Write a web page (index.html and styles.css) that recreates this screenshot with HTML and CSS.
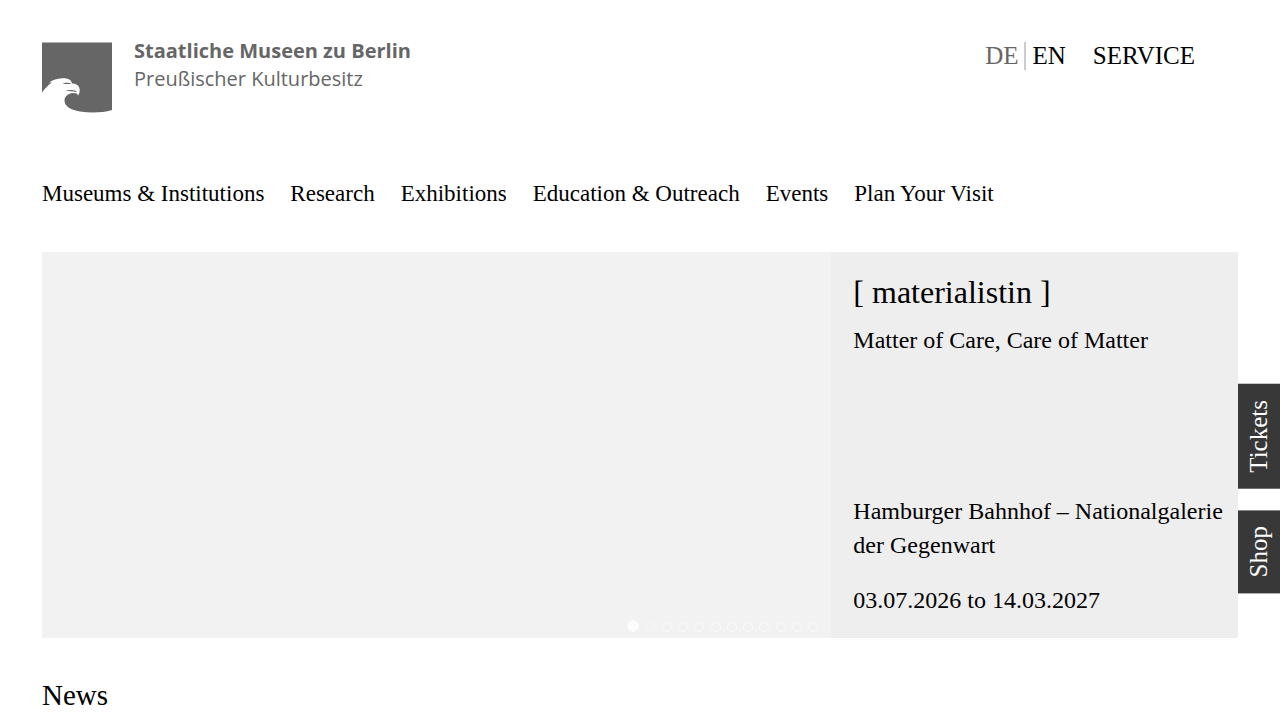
FILE: index.html
```html
<!DOCTYPE html>
<html lang="en">
<head>
    <meta charset="UTF-8">
    <meta name="viewport" content="width=device-width, initial-scale=1.0">
    <title>Staatliche Museen zu Berlin</title>
    <link rel="stylesheet" href="styles.css">
</head>
<body>

    <header class="header">
        <a class="logo" href="#">
            <svg class="logo-mark" viewBox="0 0 70 70" aria-hidden="true">
                <path fill="#666" d="M0 0H70V67.500C60 70.500 48 70.500 38 69C29 67.500 22.500 64 22.500 58C22.500 54 26 51 31 50.500L35 51L36 53C37.500 51 38 48.500 37.500 46C37 43 34 41 30 41L29.500 39.500C29 37 25 35.500 20 35.700C15 36 11 37.500 7 40L10 40C6 42.500 3 46 0 50Z"/>
                <path fill="#666" d="M20.500 41.500C23 39.800 26 39.800 29.500 41C27 42.200 24 41.200 20.500 41.500ZM23 48.500C27 47.200 31 47.300 34.500 48.500L34.500 49.500C31 48.700 27 48.500 23 48.500Z"/>
            </svg>
            <span class="logo-text">
                <strong>Staatliche Museen zu Berlin</strong>
                <span>Preußischer Kulturbesitz</span>
            </span>
        </a>
        <nav class="meta-nav" aria-label="Service">
            <a class="lang" href="#">DE</a>
            <a class="lang active" href="#">EN</a>
            <a class="service" href="#">SERVICE</a>
        </nav>
    </header>

    <nav class="main-nav" aria-label="Main">
        <a href="#">Museums &amp; Institutions</a>
        <a href="#">Research</a>
        <a href="#">Exhibitions</a>
        <a href="#">Education &amp; Outreach</a>
        <a href="#">Events</a>
        <a href="#">Plan Your Visit</a>
    </nav>

    <main>
        <section class="stage">
            <div class="stage-image">
                <div class="dots">
                    <button class="dot current" aria-label="Slide 1"></button>
                    <button class="dot visited" aria-label="Slide 2"></button>
                    <button class="dot" aria-label="Slide 3"></button>
                    <button class="dot" aria-label="Slide 4"></button>
                    <button class="dot" aria-label="Slide 5"></button>
                    <button class="dot" aria-label="Slide 6"></button>
                    <button class="dot" aria-label="Slide 7"></button>
                    <button class="dot" aria-label="Slide 8"></button>
                    <button class="dot" aria-label="Slide 9"></button>
                    <button class="dot" aria-label="Slide 10"></button>
                    <button class="dot" aria-label="Slide 11"></button>
                    <button class="dot" aria-label="Slide 12"></button>
                </div>
            </div>
            <div class="stage-text">
                <h1>[ materialistin ]</h1>
                <p class="subtitle">Matter of Care, Care of Matter</p>
                <p class="place">Hamburger Bahnhof – Nationalgalerie der Gegenwart</p>
                <p>03.07.2026 to 14.03.2027</p>
            </div>
        </section>

        <h2>News</h2>
    </main>

    <aside class="side-tabs">
        <a href="#">Tickets</a>
        <a href="#">Shop</a>
    </aside>

</body>
</html>
```

FILE: styles.css
```css
* {
    box-sizing: border-box;
}
body {
    margin: 0;
    padding: 42px 42px 0;
    font-family: "Liberation Serif", "Times New Roman", serif;
    color: #000;
    background-color: #fff;
}
a {
    color: inherit;
    text-decoration: none;
}
h1, h2, p {
    margin: 0;
    font-weight: normal;
}

/* header */
.header {
    display: flex;
    justify-content: space-between;
    align-items: flex-start;
    padding-right: 43px;
}
.logo {
    display: flex;
    gap: 22px;
    color: #666;
}
.logo-mark {
    width: 70px;
    height: 71px;
}
.logo-text {
    display: flex;
    flex-direction: column;
    font-family: "Open Sans", sans-serif;
    font-size: 20px;
    line-height: 28px;
    margin-top: -5px;
}
.meta-nav {
    display: flex;
    font-size: 25px;
    line-height: 28px;
}
.lang {
    color: #666;
}
.lang.active {
    color: #000;
    margin-left: 6px;
    padding-left: 6px;
    border-left: 2px solid #ccc;
}
.service {
    margin-left: 27px;
}

/* main navigation */
.main-nav {
    display: flex;
    gap: 26px;
    margin-top: 67px;
    font-size: 23px;
    line-height: 28px;
}

/* stage */
.stage {
    display: flex;
    margin-top: 44px;
}
.stage-image {
    position: relative;
    width: 66%;
    min-height: 386px;
    background-color: #f2f2f2;
}
.dots {
    position: absolute;
    right: 13px;
    bottom: 6px;
    display: flex;
    justify-content: space-between;
    align-items: flex-end;
    width: 191px;
}
.dot {
    width: 10px;
    height: 10px;
    padding: 0;
    border: 1px solid #fafafa;
    border-radius: 50%;
    background: none;
    cursor: pointer;
}
.dot.visited {
    border-color: #f7f7f7;
}
.dot.current {
    width: 12px;
    height: 12px;
    background-color: #fcfcfc;
}
.stage-text {
    display: flex;
    flex-direction: column;
    width: 34%;
    padding: 20px 12px 21px 22px;
    background-color: #eee;
    font-size: 24px;
    line-height: 34px;
}
.stage-text h1 {
    font-size: 32px;
    line-height: 40px;
}
.subtitle {
    margin-top: 11px;
}
.place {
    margin-top: auto;
    margin-bottom: 21px;
}

h2 {
    margin-top: 40px;
    font-size: 29px;
    line-height: 34px;
}

/* tabs on the right edge */
.side-tabs {
    position: fixed;
    top: 384px;
    right: 0;
    display: flex;
    flex-direction: column;
    gap: 21px;
}
.side-tabs a {
    width: 42px;
    padding: 16px 0;
    background-color: #383838;
    color: #fff;
    font-size: 25px;
    line-height: 42px;
    writing-mode: vertical-rl;
    transform: rotate(180deg);
}
```
